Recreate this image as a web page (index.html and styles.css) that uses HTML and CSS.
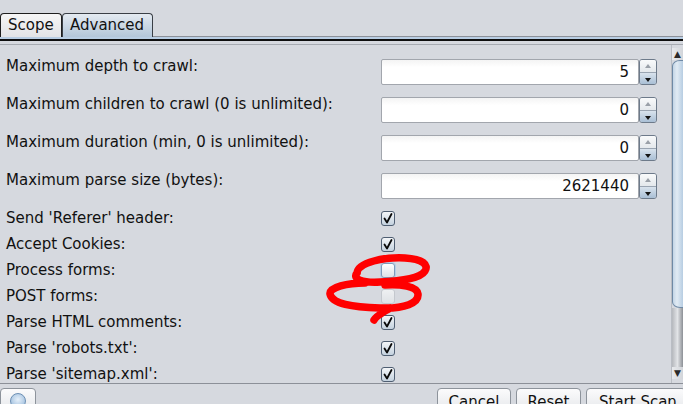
FILE: index.html
```html
<!DOCTYPE html>
<html>
<head>
<meta charset="utf-8">
<link rel="stylesheet" href="styles.css">
</head>
<body>
<div class="window">
  <div class="tabs">
    <div class="tab">Scope</div>
    <div class="tab active">Advanced</div>
    <div class="tab-fill"></div>
  </div>
  <div class="tab-line"></div>
  <div class="panel">
    <div class="content">
      <div class="srow"><span class="label">Maximum depth to crawl:</span><div class="spin"><div class="field">5</div><div class="arrows"><span class="up"></span><span class="down"></span></div></div></div>
      <div class="srow"><span class="label">Maximum children to crawl (0 is unlimited):</span><div class="spin"><div class="field">0</div><div class="arrows"><span class="up"></span><span class="down"></span></div></div></div>
      <div class="srow"><span class="label">Maximum duration (min, 0 is unlimited):</span><div class="spin"><div class="field">0</div><div class="arrows"><span class="up"></span><span class="down"></span></div></div></div>
      <div class="srow"><span class="label">Maximum parse size (bytes):</span><div class="spin"><div class="field">2621440</div><div class="arrows"><span class="up"></span><span class="down"></span></div></div></div>
      <div class="checks">
        <div class="crow"><span class="label">Send 'Referer' header:</span><span class="cb on"><svg width="12" height="13" viewBox="0 0 12 13"><path d="M2.5 6.5 L5 10.5 L9.5 2" fill="none" stroke="#0a0a0a" stroke-width="1.8" stroke-linecap="round" stroke-linejoin="round"/></svg></span></div>
        <div class="crow"><span class="label">Accept Cookies:</span><span class="cb on"><svg width="12" height="13" viewBox="0 0 12 13"><path d="M2.5 6.5 L5 10.5 L9.5 2" fill="none" stroke="#0a0a0a" stroke-width="1.8" stroke-linecap="round" stroke-linejoin="round"/></svg></span></div>
        <div class="crow"><span class="label">Process forms:</span><span class="cb focus"></span></div>
        <div class="crow"><span class="label">POST forms:</span><span class="cb dis"></span></div>
        <div class="crow"><span class="label">Parse HTML comments:</span><span class="cb on"><svg width="12" height="13" viewBox="0 0 12 13"><path d="M2.5 6.5 L5 10.5 L9.5 2" fill="none" stroke="#0a0a0a" stroke-width="1.8" stroke-linecap="round" stroke-linejoin="round"/></svg></span></div>
        <div class="crow"><span class="label">Parse 'robots.txt':</span><span class="cb on"><svg width="12" height="13" viewBox="0 0 12 13"><path d="M2.5 6.5 L5 10.5 L9.5 2" fill="none" stroke="#0a0a0a" stroke-width="1.8" stroke-linecap="round" stroke-linejoin="round"/></svg></span></div>
        <div class="crow"><span class="label">Parse 'sitemap.xml':</span><span class="cb on"><svg width="12" height="13" viewBox="0 0 12 13"><path d="M2.5 6.5 L5 10.5 L9.5 2" fill="none" stroke="#0a0a0a" stroke-width="1.8" stroke-linecap="round" stroke-linejoin="round"/></svg></span></div>
      </div>
    </div>
    <div class="scrollbar">
      <div class="sb-up">&#9650;</div>
      <div class="sb-thumb"></div>
      <div class="sb-track"></div>
      <div class="sb-down">&#9660;</div>
    </div>
    <svg class="scribble" width="683" height="404" viewBox="0 0 683 404">
      <path d="M357 272 C358 261 385 256 405 257 C423 258 429 264 425 270 C420 278 400 280 380 281 C362 282 352 278 357 272 M365 282 C348 282 329 286 330 293 C332 303 352 306 380 307 C405 308 419 302 418 293 C417 285 400 283 385 284 M390 307 C382 312 376 315 374 319"
        fill="none" stroke="#ff0000" stroke-width="7.5" stroke-linecap="round" stroke-linejoin="round"/>
    </svg>
  </div>
  <div class="footer">
    <div class="btn help"><span class="help-icon"></span></div>
    <div class="spacer"></div>
    <div class="btn b-cancel">Cancel</div>
    <div class="btn b-reset">Reset</div>
    <div class="btn b-start">Start Scan</div>
  </div>
</div>
</body>
</html>
```
FILE: styles.css
```css
html, body {
  margin: 0;
  padding: 0;
  background: #d6d9df;
  font-family: "DejaVu Sans", sans-serif;
  font-size: 15px;
  color: #111;
  overflow: hidden;
}
.window {
  width: 683px;
  height: 404px;
  display: flex;
  flex-direction: column;
  position: relative;
}
.tabs {
  display: flex;
  align-items: flex-end;
  height: 37px;
}
.tab {
  height: 24px;
  box-sizing: border-box;
  border: 1px solid #1e1e1e;
  border-bottom: none;
  border-radius: 4px 4px 0 0;
  padding: 1px 0 0 7px;
  line-height: 21px;
  background: linear-gradient(#f6f6f6, #e2e3e6);
  font-size: 15px;
  white-space: nowrap;
}
.tab:first-child { width: 62px; }
.tab.active {
  width: 91px;
  background: linear-gradient(#e4eaf1, #b3c6d9);
  border-color: #3a3f46;
  padding-left: 7px;
}
.tab-fill {
  flex: 1;
  height: 1px;
  background: #8c9098;
}
.tab-line {
  height: 2px;
  background: #b8cde3;
  border-bottom: 2px solid #0e0e0e;
}
.panel {
  margin-top: 3px;
  border-top: 1px solid #a7abb2;
  flex: 1;
  display: flex;
  position: relative;
  overflow: hidden;
}
.content {
  flex: 1;
  padding: 14px 0 0 6px;
  display: flex;
  flex-direction: column;
}
.srow {
  display: flex;
  height: 26px;
  margin-bottom: 12px;
}
.srow .label {
  width: 375px;
  line-height: 18px;
  margin-top: -2px;
  white-space: nowrap;
}
.spin {
  display: flex;
  height: 26px;
}
.field {
  width: 258px;
  height: 26px;
  box-sizing: border-box;
  border: 1px solid #a2a6ad;
  border-radius: 2px;
  background: linear-gradient(#f4f4f4, #ffffff 30%);
  text-align: right;
  padding-right: 9px;
  line-height: 25px;
}
.arrows {
  width: 18px;
  height: 26px;
  box-sizing: border-box;
  border: 1px solid #6d7a8a;
  border-radius: 3px;
  display: flex;
  flex-direction: column;
  overflow: hidden;
}
.arrows span {
  flex: 1;
  position: relative;
}
.arrows .up {
  background: linear-gradient(#f9fafb, #e4e8ec);
  border-bottom: 1px solid #9aa5b2;
}
.arrows .down {
  background: linear-gradient(#d9e3ed, #a9bfd5);
}
.arrows .up::after, .arrows .down::after {
  content: "";
  position: absolute;
  left: 5px;
  top: 4px;
  border-left: 3px solid transparent;
  border-right: 3px solid transparent;
}
.arrows .up::after { border-bottom: 4px solid #9aa0a8; }
.arrows .down::after { border-top: 4px solid #141414; top: 5px; }
.checks {
  margin-top: -6px;
  display: flex;
  flex-direction: column;
}
.crow {
  display: flex;
  align-items: center;
  height: 26px;
}
.crow .label { width: 375px; white-space: nowrap; }
.cb {
  width: 14px;
  height: 15px;
  box-sizing: border-box;
  border: 1px solid #4f5e72;
  border-radius: 3px;
  background: linear-gradient(#f4f6f8, #c4d2df);
  display: flex;
  align-items: center;
  justify-content: center;
}
.cb svg { display: block; }
.cb.focus {
  border-color: #7f9bbb;
  background: linear-gradient(#ffffff, #dde2e8);
  box-shadow: 0 0 0 1px #b6cde6;
}
.cb.dis {
  border-color: #c4c8ce;
  background: linear-gradient(#eef0f2, #dfe2e6);
}
.scrollbar {
  width: 11px;
  display: flex;
  flex-direction: column;
  border-left: 1px solid #b9bdc4;
}
.sb-up, .sb-down {
  height: 12px;
  font-size: 9px;
  line-height: 12px;
  text-align: center;
  color: #2a2a2a;
  background: linear-gradient(90deg, #e8eaed, #d2d5da);
}
.sb-up { margin-top: 3px; }
.sb-thumb {
  height: 246px;
  border-radius: 8px 0 0 8px / 6px 0 0 6px;
  border: 1px solid #6f8aa6;
  border-right: none;
  background: linear-gradient(90deg, #c3d5e6, #e1ebf4 40%, #b7cde2);
}
.sb-track {
  flex: 1;
  background: linear-gradient(90deg, #b5b8bd, #e2e4e7 50%, #8c9096);
}
.sb-down { margin-bottom: 4px; }
.scribble {
  position: absolute;
  left: 0;
  top: -44px;
  pointer-events: none;
}
.footer {
  height: 16px;
  border-top: 1px solid #8c9098;
  display: flex;
  align-items: flex-start;
  padding-top: 4px;
}
.btn {
  height: 24px;
  box-sizing: border-box;
  border: 1px solid #8d939b;
  border-radius: 4px;
  background: linear-gradient(#fbfbfc, #e6e8eb);
  line-height: 26px;
  text-align: center;
  white-space: nowrap;
}
.help { width: 36px; position: relative; }
.help-icon {
  position: absolute;
  left: 9px;
  top: 4px;
  width: 14px;
  height: 14px;
  border-radius: 50%;
  background: radial-gradient(circle at 50% 40%, #e6f0fa, #8fb3d6);
  border: 1px solid #6c8fb4;
}
.spacer { flex: 1; }
.b-cancel { width: 74px; margin-right: 5px; }
.b-reset { width: 65px; margin-right: 5px; }
.b-start { width: 100px; margin-right: -3px; text-align: left; padding-left: 12px; }
```
